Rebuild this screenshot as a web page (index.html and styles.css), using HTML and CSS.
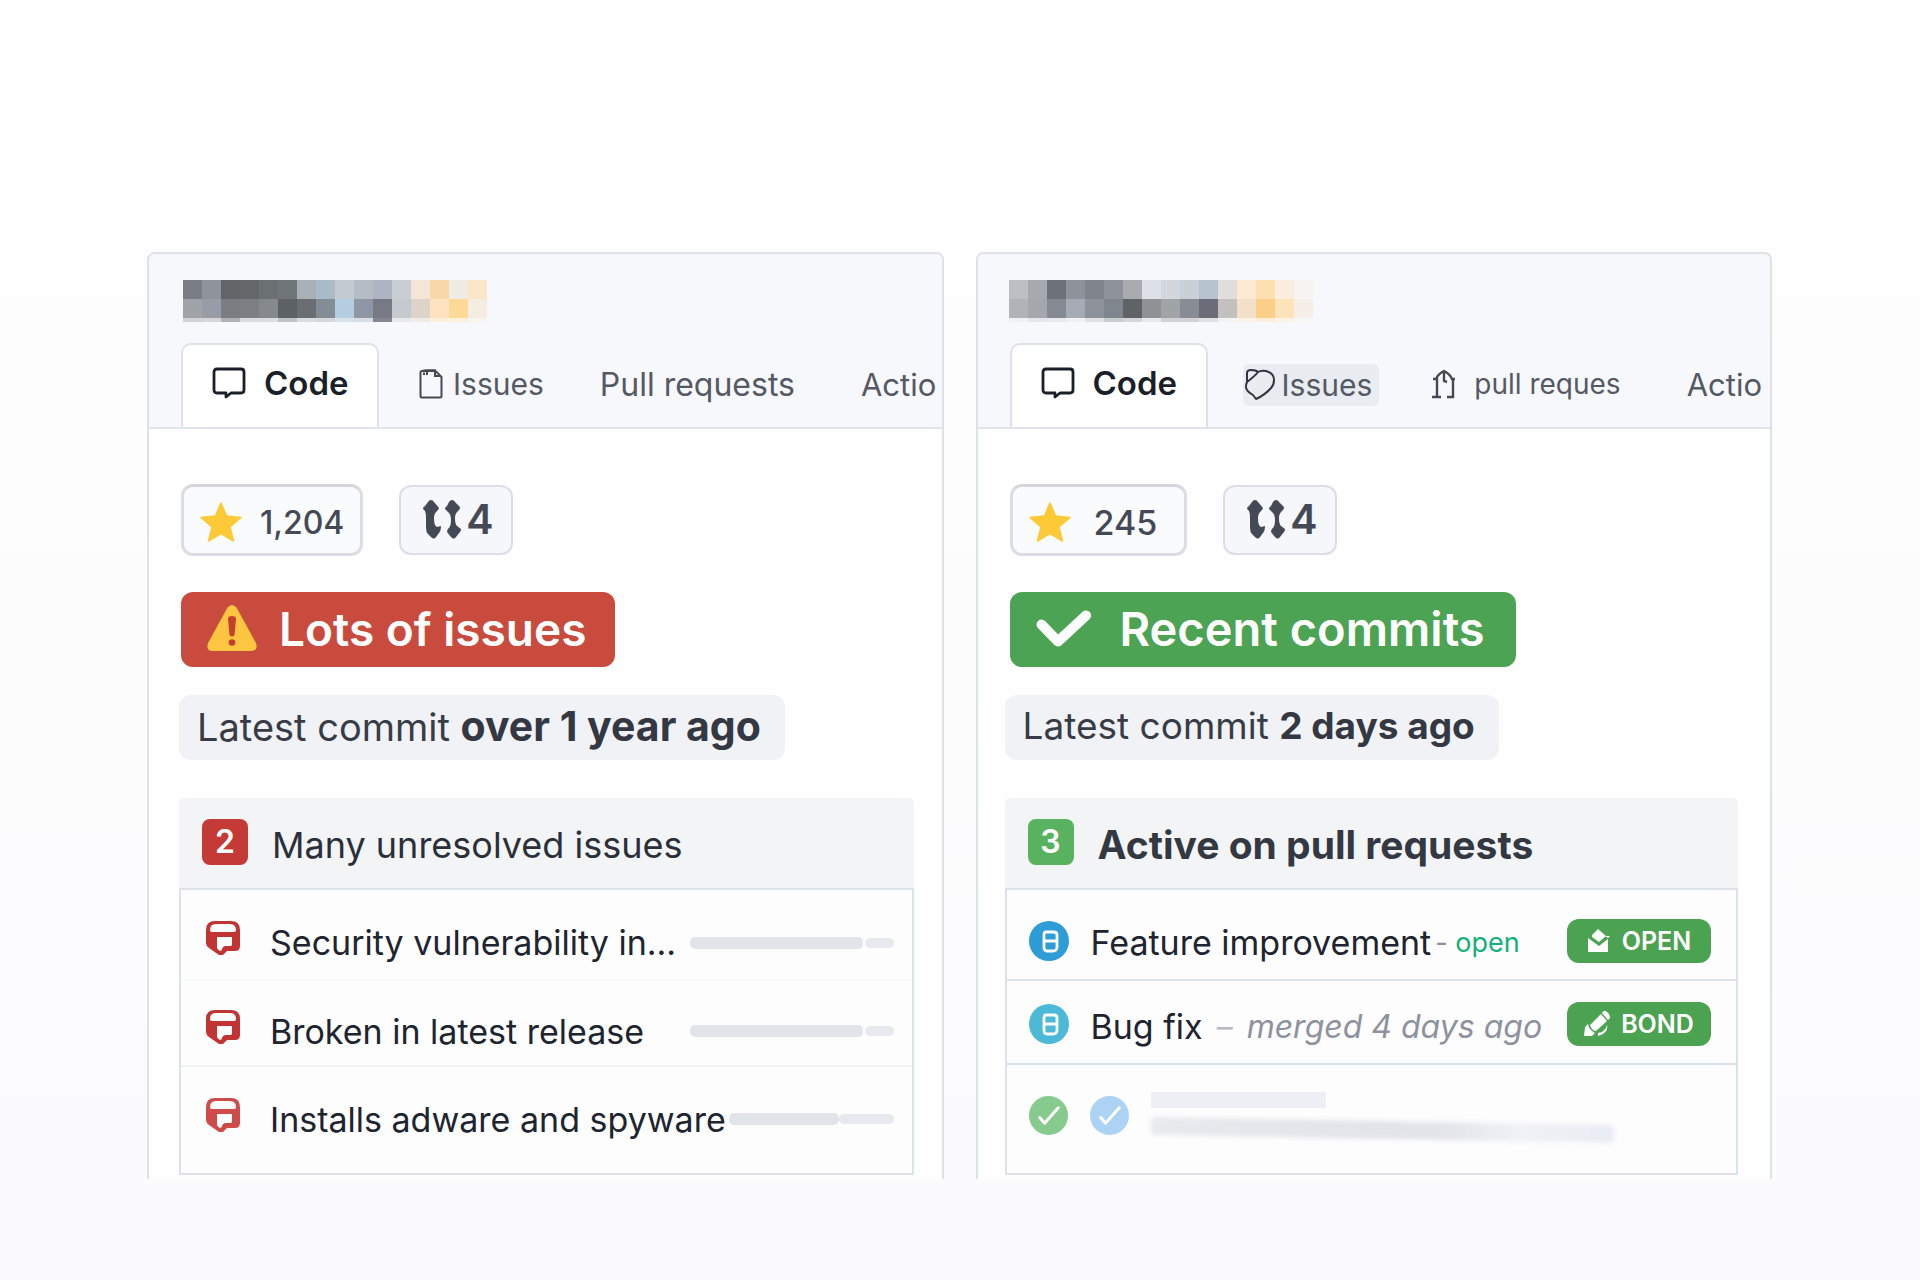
FILE: index.html
```html
<!DOCTYPE html>
<html lang="en">
<head>
<meta charset="utf-8">
<meta name="viewport" content="width=device-width, initial-scale=1">
<title>Repository comparison</title>
<link rel="stylesheet" href="styles.css">
</head>
<body>
<svg class="sprite" aria-hidden="true">
  <symbol id="i-comment" viewBox="0 0 34 32"><path d="M5 2h24q3 0 3 3v18q0 3-3 3H19l-5 4v-4H5q-3 0-3-3V5q0-3 3-3z" fill="none" stroke="currentColor" stroke-width="2.800" stroke-linejoin="round"/></symbol>
  <symbol id="i-star" viewBox="0 0 42 40"><path d="M21 1l5.600 13L41 15.500 30 25l3.500 14L21 31.500 8.500 39 12 25 1 15.500 15.400 14z" fill="#fdc936" stroke="#fdc936" stroke-width="1.500" stroke-linejoin="round"/></symbol>
  <symbol id="i-fork" viewBox="0 0 38 39"><path d="M8 0q2 0 3 2l5 6-1 2q-4 3-4 8 0 8 3 9l4-1q0 5-2 7l-3 4q-2 3-5 0l-3-3q-2-2-2-6V18q0-5-1-7l-2-2q0-2 2-3l3-4q1-2 3-2zM29 0q2 0 3 2l5 5q0 2-1 3-4 3-4 8 0 6 2 8l4 3q0 2-1 3l-4 5q-2 3-5 0l-4-5q0-2 1-3 3-3 3-8 0-6-2-8l-4-4q0-2 2-3l2-4q1-2 3-2z" fill="currentColor"/></symbol>
  <symbol id="i-alert" viewBox="0 0 34 34"><path fill="currentColor" fill-rule="evenodd" d="M9 0h16q9 0 9 9v16q0 5-5 5h-8l-4 4h-4L3 27q-3-2-3-5V9q0-9 9-9zm1 3q-6 0-6 6 0 2 2 2h22q2 0 2-2 0-6-6-6zm1 13v10q0 3 4 4l2-4 2-1h6q1 0 1-2v-7z"/></symbol>
  <symbol id="i-pull" viewBox="0 0 40 40"><circle cx="20" cy="20" r="20" fill="currentColor"/><path d="M17 11h8q3 0 3 3v12q0 4-4 4h-6q-3 0-3-4V14q0-3 2-3zM15 20h13" fill="none" stroke="#fff" stroke-width="2.800"/></symbol>
  <symbol id="i-done" viewBox="0 0 40 40"><circle cx="20" cy="20" r="20" fill="currentColor"/><path d="M11 22l5 6 14-16" fill="none" stroke="#fff" stroke-width="3" stroke-linecap="round" stroke-linejoin="round"/></symbol>
</svg>

<main class="board">
  <section class="panel panel-stale">
    <header class="panel-head">
      <svg class="mosaic" viewBox="0 0 304 43" shape-rendering="crispEdges" aria-hidden="true">
        <g id="mosaic-a"></g>
      </svg>
      <nav class="tabs">
        <a class="tab tab-active" href="#code"><svg class="icon-comment"><use href="#i-comment"/></svg>Code</a>
        <a class="tab tab-issues" href="#issues"><svg class="icon-page" viewBox="0 0 24 30"><path d="M1.500 3v24q0 1.500 1.500 1.500h18q1.500 0 1.500-1.500V8l-6-6H3q-1.500 0-1.500 1.500M3 2l4-.800h10M8 2v4M5 6V3.500M16 2v5h6" fill="none" stroke="currentColor" stroke-width="2"/></svg>Issues</a>
        <a class="tab tab-pulls" href="#pulls">Pull requests</a>
        <a class="tab tab-actions" href="#actions">Actio</a>
      </nav>
    </header>
    <div class="panel-body">
      <div class="counts">
        <button class="count count-star" type="button"><svg class="icon-star"><use href="#i-star"/></svg>1,204</button>
        <button class="count count-fork" type="button"><svg class="icon-fork"><use href="#i-fork"/></svg>4</button>
      </div>
      <h2 class="verdict verdict-bad"><svg class="icon-warning" viewBox="0 0 50 46"><path d="M20.500 2.500q4.500-5 9 0L49 38q2.500 8-5 8H6q-7.500 0-5-8z" fill="#fdc540"/><path d="M21 14q0-3 4-3t4 3l-1.500 16q-2.500 3-5 0z" fill="#c43f2e"/><circle cx="25" cy="37.500" r="3.300" fill="#c43f2e"/></svg>Lots of issues</h2>
      <p class="commit">Latest commit <strong>over 1 year ago</strong></p>
      <section class="list">
        <h3 class="list-head"><span class="tally tally-red">2</span>Many unresolved issues</h3>
        <ul class="rows">
          <li class="row row-first"><svg class="icon-alert"><use href="#i-alert"/></svg><span class="row-text">Security vulnerability in...</span><span class="bars"><i class="bar bar-long"></i><i class="bar bar-end"></i></span></li>
          <li class="row row-second"><svg class="icon-alert"><use href="#i-alert"/></svg><span class="row-text">Broken in latest release</span><span class="bars"><i class="bar bar-long"></i><i class="bar bar-end"></i></span></li>
          <li class="row row-third"><svg class="icon-alert icon-soft"><use href="#i-alert"/></svg><span class="row-text">Installs adware and spyware</span><span class="bars bars-short"><i class="bar bar-long"></i><i class="bar bar-end"></i></span></li>
        </ul>
      </section>
    </div>
  </section>

  <section class="panel panel-active">
    <header class="panel-head">
      <svg class="mosaic" viewBox="0 0 304 43" shape-rendering="crispEdges" aria-hidden="true">
        <g id="mosaic-b"></g>
      </svg>
      <nav class="tabs">
        <a class="tab tab-active" href="#code-b"><svg class="icon-comment"><use href="#i-comment"/></svg>Code</a>
        <a class="tab tab-tagged" href="#issues-b"><svg class="icon-tag" viewBox="0 0 30 32"><path d="M2 14V4q0-3 4-3 5 0 7 2M2 13q8-6 11-10 3-2 8-1 8 2 8 9 0 5-3 8-6 7-15 11l-3-4q-7-4-7-8 0-3 1-5z" fill="none" stroke="currentColor" stroke-width="2" stroke-linejoin="round"/></svg>Issues</a>
        <a class="tab tab-pull-small" href="#pulls-b"><svg class="icon-branch" viewBox="0 0 26 30"><path d="M6 9v18M1 28h9M2 10h4M5 10q2-5 8-8 6 3 8 8M20 10h4M22 10v18h-6M13 2v10l3 1" fill="none" stroke="currentColor" stroke-width="2.400"/></svg>pull reques</a>
        <a class="tab tab-actions" href="#actions-b">Actio</a>
      </nav>
    </header>
    <div class="panel-body">
      <div class="counts">
        <button class="count count-star" type="button"><svg class="icon-star"><use href="#i-star"/></svg>245</button>
        <button class="count count-fork" type="button"><svg class="icon-fork"><use href="#i-fork"/></svg>4</button>
      </div>
      <h2 class="verdict verdict-good"><svg class="icon-check" viewBox="0 0 56 38"><path d="M5.500 14.500L22 31.500 50 5.500" fill="none" stroke="#fff" stroke-width="10" stroke-linecap="round" stroke-linejoin="round"/></svg>Recent commits</h2>
      <p class="commit">Latest commit <strong>2 days ago</strong></p>
      <section class="list">
        <h3 class="list-head list-head-bold"><span class="tally tally-green">3</span>Active on pull requests</h3>
        <ul class="rows">
          <li class="row row-first"><svg class="icon-pull"><use href="#i-pull"/></svg><span class="row-text">Feature improvement</span><span class="state"><span class="dash">-</span> open</span><button class="label" type="button"><svg class="icon-label" viewBox="0 0 24 24"><path d="M5 6l6-6 8 7-7 6-7-5zM1 9l11 8 9-7v13H1zM18 7h5l-2 2z" fill="#fff"/></svg>OPEN</button></li>
          <li class="row row-second"><svg class="icon-pull icon-cyan"><use href="#i-pull"/></svg><span class="row-text">Bug fix</span><span class="merged"><span class="dash">–</span><em>merged 4 days ago</em></span><button class="label" type="button"><svg class="icon-label icon-pencil" viewBox="0 0 26 26"><path d="M6 14L17 3l6 7-11 10q-4 0-6-6zM18 2q2-4 5-1 3 2 3 6l-2 2zM1 16l3-3q1 6 7 9l-3 3H0zM14 22q7-1 9-8 2 8-9 11z" fill="#fff"/></svg>BOND</button></li>
          <li class="row row-third"><svg class="icon-done icon-green"><use href="#i-done"/></svg><svg class="icon-done icon-blue"><use href="#i-done"/></svg><span class="ghost"><i class="ghost-top"></i><i class="ghost-bottom"></i></span></li>
        </ul>
      </section>
    </div>
  </section>
</main>
<script src="mosaic.js"></script>
</body>
</html>
```
FILE: styles.css
```css
* { box-sizing: border-box; }
body {
  margin: 0;
  min-height: 100vh;
  background: linear-gradient(180deg, #fefefe, #fbfbfd);
  color: #20242f;
  font-family: Inter, "Liberation Sans", sans-serif;
}
a { color: inherit; text-decoration: none; }
button { font: inherit; color: inherit; margin: 0; cursor: pointer; }
svg { flex: none; }
.sprite { position: absolute; width: 0; height: 0; }

.board {
  display: grid;
  grid-template-columns: minmax(0, 1fr) minmax(0, 1fr);
  gap: 32px;
  padding: 252px 148px 100px 147px;
}
.panel {
  border: 2px solid #dde2e9;
  border-bottom: 0;
  border-radius: 8px 8px 0 0;
  background: #fefefe;
}
.panel-head {
  padding: 26px 0 0 32px;
  background: #f7f8fb;
  border-bottom: 2px solid #e1e5eb;
  border-radius: 6px 6px 0 0;
}
.mosaic { display: block; width: 304px; height: 43px; margin: 0 0 20px 2px; }
.panel-active .mosaic { margin-left: -1px; }

.tabs { display: flex; align-items: stretch; height: 84px; overflow: hidden; }
.tab {
  display: flex;
  align-items: center;
  flex: none;
  padding-bottom: 2px;
  font-size: 30px;
  color: #555963;
  white-space: nowrap;
}
.tab-active {
  gap: 18px;
  width: 198px;
  padding: 0 0 6px 29px;
  border: 2px solid #dde2e9;
  border-bottom: 0;
  border-radius: 10px 10px 0 0;
  background: #fff;
  font-size: 33px;
  font-weight: 600;
  color: #1b1f29;
}
.icon-comment { width: 34px; height: 32px; }
.tab-issues { gap: 10px; margin-left: 40px; }
.icon-page { width: 24px; height: 30px; color: #444954; }
.tab-pulls { margin-left: 56px; font-size: 32px; }
.tab-actions { margin-left: 66px; font-size: 31px; }
.tab-tagged {
  align-self: center;
  gap: 7px;
  height: 42px;
  margin-left: 35px;
  padding: 0 7px 0 2px;
  border-radius: 6px;
  background: #e9edf1;
}
.icon-tag { width: 30px; height: 32px; color: #30353f; }
.tab-pull-small { gap: 17px; margin-left: 52px; font-size: 28px; }
.icon-branch { width: 26px; height: 30px; color: #444954; }

.panel-body { padding: 55px 28px 4px 30px; }
.panel-active .panel-body { padding: 55px 32px 4px 27px; }

.counts { display: flex; align-items: center; gap: 36px; margin-left: 2px; }
.panel-active .counts, .panel-active .verdict { margin-left: 5px; }
.count {
  display: flex;
  align-items: center;
  height: 72px;
  border: 3px solid #dadde4;
  border-radius: 12px;
  background: #fafbfd;
  color: #444955;
}
.count-star { gap: 18px; padding: 4px 16px 0; font-size: 32px; font-weight: 500; border-top-color: #d3d7dd; }
.panel-active .count-star { gap: 23px; padding-right: 27px; font-size: 34px; }
.icon-star { width: 42px; height: 40px; }
.count-fork { gap: 5px; height: 70px; padding: 0 17px 2px 22px; border-width: 2px; border-color: #dcdde9; background: #f6f7fb; font-size: 41px; font-weight: 600; }
.icon-fork { width: 38px; height: 39px; }

.verdict {
  display: flex;
  align-items: center;
  width: fit-content;
  height: 75px;
  margin: 36px 0 28px 2px;
  padding: 0 31px 2px 26px;
  border-radius: 12px;
  color: #fff;
  font-size: 47px;
  font-weight: 600;
  white-space: nowrap;
}
.verdict-bad { gap: 22px; padding-right: 29px; background: #c84b3e; font-size: 46px; }
.verdict-good { gap: 28px; background: #4ca353; }
.icon-warning { width: 50px; height: 46px; margin-bottom: 2px; }
.icon-check { width: 56px; height: 38px; }

.commit {
  width: fit-content;
  height: 65px;
  margin: 0 0 38px;
  padding: 0 24px 0 18px;
  border-radius: 12px;
  background: #f1f2f6;
  color: #383c47;
  font-size: 38px;
  line-height: 62px;
  white-space: nowrap;
}
.panel-active .commit { font-size: 37px; }
.commit strong { font-weight: 700; color: #333843; }
.panel-stale .commit strong { font-size: 41px; }

.list-head {
  display: flex;
  align-items: center;
  gap: 24px;
  height: 90px;
  margin: 0;
  padding: 3px 23px 0;
  border-radius: 5px 5px 0 0;
  background: #f3f4f6;
  color: #2a2f39;
  font-size: 36px;
  font-weight: 400;
}
.list-head-bold { font-size: 39px; font-weight: 700; color: #333842; }
.tally {
  display: grid;
  place-items: center;
  width: 46px;
  height: 46px;
  margin-bottom: 6px;
  border-radius: 8px;
  color: #fff;
  font-size: 32px;
  font-weight: 600;
}
.tally-red { background: #c43a37; }
.tally-green { background: #59b25f; }

.rows { margin: 0; padding: 0; list-style: none; border: 2px solid #dde2e9; background: #fdfdfe; }
.row { display: flex; align-items: center; padding: 0 18px 0 24px; white-space: nowrap; }
.row-first { height: 91px; padding-top: 16px; border-bottom: 2px solid #f9fafb; }
.row-second { height: 86px; padding-top: 16px; border-bottom: 2px solid #f0f2f5; }
.row-third { height: 106px; padding-bottom: 2px; }
.row-text { font-size: 34px; }
.icon-alert { width: 34px; height: 34px; margin: 0 30px 9px 1px; color: #c23434; }
.icon-soft { color: #cf4b4a; }
.bars { display: flex; align-items: center; gap: 2px; width: 204px; margin-left: auto; }
.bars-short { width: 165px; gap: 0; }
.bar { height: 12px; border-radius: 5px; background: #e1e5ea; }
.bar-long { flex: 6; }
.bar-end { flex: 1; height: 10px; background: #e6e9ee; }
.bars-short .bar-long { flex: 2; }

.panel-active .row { padding-right: 25px; padding-left: 22px; }
.panel-active .row-first { padding-top: 12px; border-color: #dde2e9; }
.panel-active .row-second { height: 84px; padding-top: 4px; border-color: #dde2e9; }
.panel-active .row-third { height: 108px; padding-bottom: 8px; }
.panel-active .row-text, .state, .merged { padding-top: 4px; }
.icon-pull { width: 40px; height: 40px; margin-right: 22px; color: #2e9cd6; }
.icon-cyan { color: #4bb9d7; }
.state { margin-left: 4px; color: #14b07a; font-size: 27px; }
.state .dash { color: #8a8f98; }
.merged { display: flex; gap: 14px; margin-left: 14px; color: #8e929d; font-size: 32px; }
.merged .dash { color: #b5b9c0; }
.label {
  display: flex;
  align-items: center;
  justify-content: center;
  gap: 11px;
  width: 144px;
  height: 44px;
  margin-left: auto;
  padding: 0;
  border: 0;
  border-radius: 12px;
  background: #4ba351;
  color: #fff;
  font-size: 25px;
  font-weight: 600;
}
.icon-label { width: 24px; height: 24px; }
.icon-pencil { width: 26px; height: 26px; }
.icon-done { width: 39px; height: 39px; margin-right: 22px; }
.icon-green { color: #86cb8d; }
.icon-blue { color: #add3f4; }
.ghost { display: grid; gap: 13px; flex: 1; padding: 0 98px 0 0; }
.ghost-top { width: 38%; height: 16px; background: #eff0f5; }
.ghost-bottom { height: 18px; border-radius: 2px; background: linear-gradient(90deg, #e8eaee, #e1e4e9 50%, #e3e6eb 65%, #f0f2f6 80%, #e9ecf3 100%); transform: rotate(1deg); filter: blur(2px); }
```
FILE: mosaic.js
```js
// Each mosaic is three rows of sixteen tiles; the last row is a thin strip.
const tiles = {
  "mosaic-a": [
    "7a7e84 8f949a 616568 64686b 6b7073 6f7478 a9b1b7 a9bac8 c3cbd0 b6bcc6 afb5c0 c9ced5 f3e6d6 f8d8a8 efece6 fbe7c8",
    "a0a4a8 989ca6 7a7e82 7b7f83 85898c 5c6165 6a6e72 848c96 b4cde0 8f97a6 777a84 c5cad0 ddd3c8 fde3c0 fdd998 f5ece2",
    "d0d3d7 d4d6da b0b2b6 dcdde0 dcdde0 c0c2c4 dcdde0 d5d8dc d8e2ea dadde3 85868f e8e9ec efebe6 fdeedb fdf0dc f8f4f0"
  ],
  "mosaic-b": [
    "bcc0c4 a6aaae 6d717a 8e939b 80848c 8e939a a8abaf dde0e6 d2d7dc c9d0d8 b6c3cf dfdedd fdead2 fde0b2 fbeedf f6f3f0",
    "b0b4b8 a4a8ac 858a92 a6aab4 8d929b 7f868e 5f6368 8e9294 a0a4a7 888d95 6a6d78 c2c1c0 f2e0c8 fbce8a fde3ba f5efe8",
    "f0f1f4 e4e6ea e8e9ec f0f1f4 dfe1e5 c9ccd0 d5d6d9 e8e9ec d0d2d5 d0d2d6 e0e1e6 f4f4f4 faf3ea fdeeda fbf3e8 f7f6f6"
  ]
};
const top_ = [0, 19, 38];
const tall = [19, 19, 4];
for (const [id, rows] of Object.entries(tiles)) {
  const group = document.getElementById(id);
  rows.forEach((row, r) => row.split(" ").forEach((hex, c) => {
    const rect = document.createElementNS("http://www.w3.org/2000/svg", "rect");
    rect.setAttribute("x", c * 19);
    rect.setAttribute("y", top_[r]);
    rect.setAttribute("width", 19);
    rect.setAttribute("height", tall[r]);
    rect.setAttribute("fill", "#" + hex);
    group.append(rect);
  }));
}
```
